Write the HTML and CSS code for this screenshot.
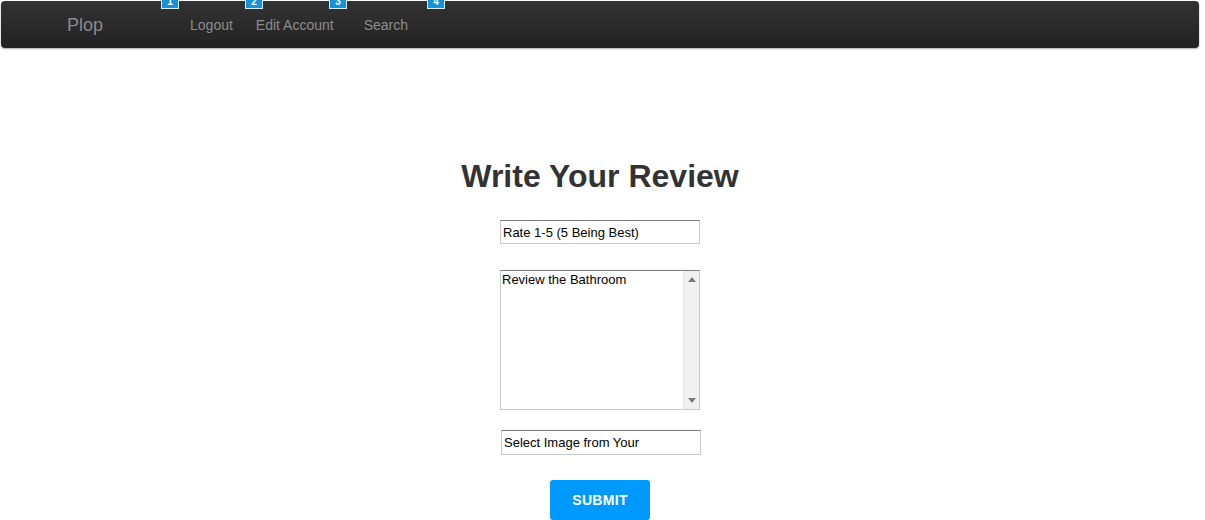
FILE: index.html
```html
<!DOCTYPE html>
<html lang="en">
<head>
<meta charset="utf-8">
<title>Plop - Write Your Review</title>
<link rel="stylesheet" href="styles.css">
</head>
<body>
<header class="navbar">
  <a class="brand" href="#">Plop</a>
  <nav class="nav">
    <a class="nav-link logout" href="#">Logout</a>
    <a class="nav-link edit" href="#">Edit Account</a>
    <a class="nav-link search" href="#">Search</a>
  </nav>
  <span class="badge b1">1</span>
  <span class="badge b2">2</span>
  <span class="badge b3">3</span>
  <span class="badge b4">4</span>
</header>
<main class="review">
  <h1 class="title">Write Your Review</h1>
  <form class="review-form">
    <input class="field rate" type="text" placeholder="Rate 1-5 (5 Being Best)">
    <div class="textarea-box">
      <textarea class="body" placeholder="Review the Bathroom"></textarea>
      <div class="scrollbar" aria-hidden="true">
        <span class="arrow up"></span>
        <span class="arrow down"></span>
      </div>
    </div>
    <input class="field image" type="text" placeholder="Select Image from Your">
    <button class="submit" type="button">SUBMIT</button>
  </form>
</main>
</body>
</html>
```
FILE: styles.css
```css
html, body {
  margin: 0;
  padding: 0;
  background: #fff;
}
body {
  font-family: "Liberation Sans", Arial, sans-serif;
  padding: 1px 0 0 1px;
}
.navbar {
  position: relative;
  width: 1198px;
  height: 47px;
  box-sizing: border-box;
  border-radius: 4px;
  background: linear-gradient(#333333, #222222);
  box-shadow: 0 1px 2px rgba(0,0,0,0.35);
  display: flex;
  align-items: flex-start;
}
.brand {
  margin: 13px 0 0 66px;
  font-size: 18px;
  line-height: 22px;
  color: #8a8a8a;
  text-decoration: none;
}
.nav {
  display: flex;
  margin: 16px 0 0 87px;
}
.nav-link {
  font-size: 14px;
  line-height: 17px;
  color: #8c8c8c;
  text-decoration: none;
}
.edit { margin-left: 23px; }
.search { margin-left: 30px; }
.badge {
  position: absolute;
  top: -1px;
  width: 18px;
  height: 9px;
  box-sizing: border-box;
  background: #1493d6;
  border: 1px solid #d8eef9;
  border-top: none;
  color: #fff;
  font-size: 10px;
  font-weight: bold;
  line-height: 4px;
  text-align: center;
  overflow: hidden;
}
.b1 { left: 160px; }
.b2 { left: 244px; }
.b3 { left: 328px; }
.b4 { left: 426px; }

.review {
  width: 1198px;
  display: flex;
  flex-direction: column;
  align-items: center;
}
.title {
  margin: 110px 0 0 0;
  font-size: 32px;
  line-height: 36px;
  font-weight: bold;
  color: #333;
}
.review-form {
  display: flex;
  flex-direction: column;
  align-items: center;
}
.field,
.textarea-box {
  box-sizing: border-box;
  width: 200px;
  margin: 0;
  background: #fff;
  border: 1px solid #c9c9c9;
  border-top-color: #7d7d7d;
  border-radius: 0;
}
.field {
  padding: 2px 2px;
  font-family: "Liberation Sans", Arial, sans-serif;
  font-size: 13px;
  color: #000;
  outline: none;
}
.field::placeholder,
.body::placeholder { color: #000; opacity: 1; }
.rate {
  margin-top: 26px;
  height: 24px;
}
.textarea-box {
  margin-top: 26px;
  height: 140px;
  display: flex;
}
.body {
  flex: 1;
  min-width: 0;
  margin: 0;
  border: none;
  outline: none;
  resize: none;
  padding: 1px;
  font-family: "Liberation Sans", Arial, sans-serif;
  font-size: 13px;
  line-height: 15px;
  color: #000;
  background: #fff;
}
.scrollbar {
  width: 15px;
  background: #f1f1f1;
  border-left: 1px solid #e6e6e6;
  display: flex;
  flex-direction: column;
  justify-content: space-between;
  align-items: center;
  padding: 6px 0;
}
.arrow {
  width: 0;
  height: 0;
  border-left: 4px solid transparent;
  border-right: 4px solid transparent;
}
.arrow.up { border-bottom: 5px solid #7a7a7a; }
.arrow.down { border-top: 5px solid #7a7a7a; }
.image {
  margin-top: 20px;
  height: 25px;
  margin-left: 2px;
}
.submit {
  margin-top: 25px;
  width: 100px;
  height: 40px;
  border: none;
  border-radius: 3px;
  background: #0099ff;
  color: #fff;
  font-family: "Liberation Sans", Arial, sans-serif;
  font-size: 14px;
  font-weight: bold;
  letter-spacing: 0.3px;
}
```
